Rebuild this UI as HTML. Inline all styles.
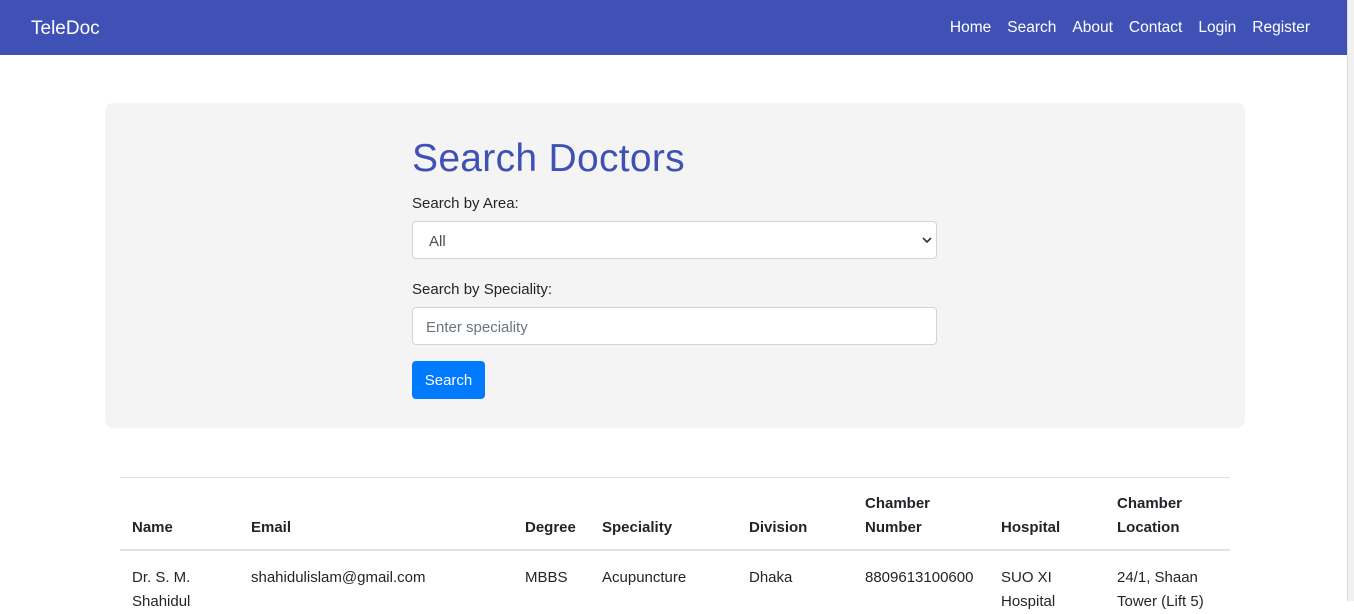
<!DOCTYPE html>
<html><head><meta charset="utf-8"><style>
*{box-sizing:border-box;margin:0;padding:0}
body{width:1354px;height:601px;overflow:hidden;background:#fff;font-family:"Liberation Sans",sans-serif;color:#212529;position:relative;font-size:15px}
.nav{position:absolute;left:0;top:0;width:1347px;height:55px;background:#3f51b5;color:#fff}
.nav .b{position:absolute;left:31px;top:18px;font-size:19px}
.nav .l{position:absolute;right:37px;top:19px;font-size:15.5px;display:flex;gap:16px}
.sb{position:absolute;right:0;top:0;width:7px;height:601px;background:#f1f1f1}
.sb:after{content:"";position:absolute;left:0;top:0;width:1px;height:601px;background:#ddd}
.j{position:absolute;left:105px;top:103px;width:1140px;height:325px;background:#f4f4f4;border-radius:8px}
h1{position:absolute;left:412px;top:137px;font-size:39px;font-weight:normal;color:#3f51b5;letter-spacing:0.3px}
.lab{position:absolute;left:412px;font-size:15px}
.box{position:absolute;left:412px;width:525px;height:38px;background:#fff;border:1px solid #ced4da;border-radius:4px;font-size:15px;padding:11px 13px}
.btn{position:absolute;left:412px;top:361px;width:73px;height:38px;background:#007bff;color:#fff;border-radius:4px;font-size:15px;text-align:center;line-height:40px}
.line{position:absolute;left:120px;width:1110px;background:#dee2e6}
.c{position:absolute;font-size:15px;line-height:24px}
.h{font-weight:bold}
</style></head><body>
<div class="nav"><div class="b">TeleDoc</div><div class="l"><span>Home</span><span>Search</span><span>About</span><span>Contact</span><span>Login</span><span>Register</span></div></div>
<div class="sb"></div>
<div class="j"></div>
<h1>Search Doctors</h1>
<div class="lab" style="top:195px">Search by Area:</div>
<div class="box" style="top:221px;color:#495057;padding-left:16px">All<svg style="position:absolute;right:4px;top:14px" width="10" height="8" viewBox="0 0 10 8"><path d="M1 2l4 4 4-4" stroke="#333" stroke-width="1.6" fill="none"/></svg></div>
<div class="lab" style="top:281px">Search by Speciality:</div>
<div class="box" style="top:307px;color:#6c757d">Enter speciality</div>
<div class="btn">Search</div>
<div class="line" style="top:477px;height:1px"></div>
<div class="line" style="top:549px;height:2px"></div>
<div class="c h" style="left:132px;top:516px">Name</div>
<div class="c h" style="left:251px;top:516px">Email</div>
<div class="c h" style="left:525px;top:516px">Degree</div>
<div class="c h" style="left:602px;top:516px">Speciality</div>
<div class="c h" style="left:749px;top:516px">Division</div>
<div class="c h" style="left:865px;top:492px">Chamber<br>Number</div>
<div class="c h" style="left:1001px;top:516px">Hospital</div>
<div class="c h" style="left:1117px;top:492px">Chamber<br>Location</div>
<div class="c" style="left:132px;top:566px">Dr. S. M.<br>Shahidul</div>
<div class="c" style="left:251px;top:566px">shahidulislam@gmail.com</div>
<div class="c" style="left:525px;top:566px">MBBS</div>
<div class="c" style="left:602px;top:566px">Acupuncture</div>
<div class="c" style="left:749px;top:566px">Dhaka</div>
<div class="c" style="left:865px;top:566px">8809613100600</div>
<div class="c" style="left:1001px;top:566px">SUO XI<br>Hospital</div>
<div class="c" style="left:1117px;top:566px">24/1, Shaan<br>Tower (Lift 5)</div>
</body></html>
